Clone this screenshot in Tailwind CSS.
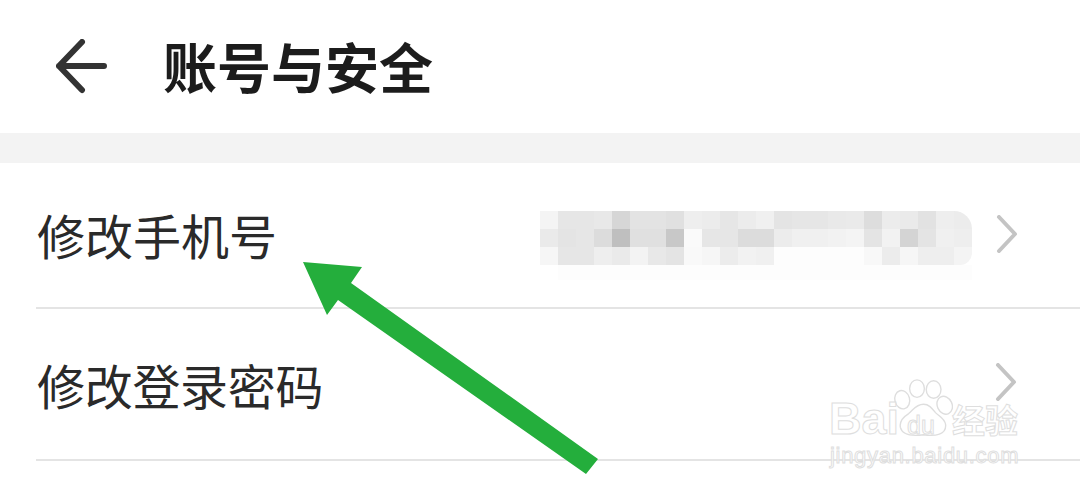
<!DOCTYPE html>
<html lang="zh-CN">
<head>
    <meta charset="UTF-8">
    <title>账号与安全</title>
    <script src="https://cdn.jsdelivr.net/npm/@tailwindcss/browser@4"></script>
</head>
<body class="relative w-[1080px] h-[493px] overflow-hidden bg-white font-['Noto_Sans_CJK_SC',sans-serif]">

    <!-- Header -->
    <div class="flex items-center h-[133px] pl-[56px]">
        <svg class="w-[52px] h-[56px]" viewBox="0 0 52 56" fill="none" stroke="#333" stroke-width="6" stroke-linecap="round" stroke-linejoin="round">
            <path d="M26 3 L3 27 L26 51 M3 27 H48"/>
        </svg>
        <h1 class="ml-[55px] mb-[2px] text-[54px] leading-none font-bold text-[#1c1c1c]">账号与安全</h1>
    </div>
    <div class="h-[30px] bg-[#f3f3f3]"></div>

    <!-- Rows -->
    <div class="ml-[36px]">
        <div class="flex items-center h-[146px] pb-[3px] border-b-2 border-[#e4e4e4]">
            <span class="ml-[1px] text-[48px] leading-none text-[#2a2a2a]">修改手机号</span>
            <div class="ml-[263px] mt-[24px] flex flex-col">
                <div class="flex h-[18px] rounded-tr-[20px] overflow-hidden">
                    <div class="w-[18px] bg-[#f4f4f4]"></div><div class="w-[18px] bg-[#e6e6e6]"></div><div class="w-[18px] bg-[#e6e6e6]"></div><div class="w-[18px] bg-[#e8e8e8]"></div><div class="w-[18px] bg-[#d6d6d6]"></div><div class="w-[18px] bg-[#e3e3e3]"></div><div class="w-[18px] bg-[#e3e3e3]"></div><div class="w-[18px] bg-[#e0e0e0]"></div><div class="w-[18px] bg-[#eeeeee]"></div><div class="w-[18px] bg-[#ececec]"></div><div class="w-[18px] bg-[#e6e6e6]"></div><div class="w-[18px] bg-[#ececec]"></div><div class="w-[18px] bg-[#f0f0f0]"></div><div class="w-[18px] bg-[#e4e4e4]"></div><div class="w-[18px] bg-[#e6e6e6]"></div><div class="w-[18px] bg-[#e6e6e6]"></div><div class="w-[18px] bg-[#e9e9e9]"></div><div class="w-[18px] bg-[#eaeaea]"></div><div class="w-[18px] bg-[#dddddd]"></div><div class="w-[18px] bg-[#ececec]"></div><div class="w-[18px] bg-[#eaeaea]"></div><div class="w-[18px] bg-[#e2e2e2]"></div><div class="w-[18px] bg-[#eeeeee]"></div><div class="w-[18px] bg-[#ececec]"></div>
                </div>
                <div class="flex h-[18px]">
                    <div class="w-[18px] bg-[#eaeaea]"></div><div class="w-[18px] bg-[#e4e4e4]"></div><div class="w-[18px] bg-[#e6e6e6]"></div><div class="w-[18px] bg-[#dcdcdc]"></div><div class="w-[18px] bg-[#bfbfbf]"></div><div class="w-[18px] bg-[#e0e0e0]"></div><div class="w-[18px] bg-[#e0e0e0]"></div><div class="w-[18px] bg-[#c8c8c8]"></div><div class="w-[18px] bg-[#fafafa]"></div><div class="w-[18px] bg-[#e6e6e6]"></div><div class="w-[18px] bg-[#e6e6e6]"></div><div class="w-[18px] bg-[#dcdcdc]"></div><div class="w-[18px] bg-[#dcdcdc]"></div><div class="w-[18px] bg-[#ececec]"></div><div class="w-[18px] bg-[#f0f0f0]"></div><div class="w-[18px] bg-[#f0f0f0]"></div><div class="w-[18px] bg-[#f2f2f2]"></div><div class="w-[18px] bg-[#f4f4f4]"></div><div class="w-[18px] bg-[#e4e4e4]"></div><div class="w-[18px] bg-[#f2f2f2]"></div><div class="w-[18px] bg-[#d4d4d4]"></div><div class="w-[18px] bg-[#e4e4e4]"></div><div class="w-[18px] bg-[#f0f0f0]"></div><div class="w-[18px] bg-[#eeeeee]"></div>
                </div>
                <div class="flex h-[18px] rounded-br-[12px] overflow-hidden">
                    <div class="w-[18px] bg-[#f6f6f6]"></div><div class="w-[18px] bg-[#e6e6e6]"></div><div class="w-[18px] bg-[#e6e6e6]"></div><div class="w-[18px] bg-[#eeeeee]"></div><div class="w-[18px] bg-[#eaeaea]"></div><div class="w-[18px] bg-[#f3f3f3]"></div><div class="w-[18px] bg-[#e8e8e8]"></div><div class="w-[18px] bg-[#e4e4e4]"></div><div class="w-[18px] bg-[#f9f9f9]"></div><div class="w-[18px] bg-[#f6f6f6]"></div><div class="w-[18px] bg-[#ececec]"></div><div class="w-[18px] bg-[#f2f2f2]"></div><div class="w-[18px] bg-[#f0f0f0]"></div><div class="w-[18px] bg-[#fdfdfd]"></div><div class="w-[18px] bg-[#fdfdfd]"></div><div class="w-[18px] bg-[#fdfdfd]"></div><div class="w-[18px] bg-[#fdfdfd]"></div><div class="w-[18px] bg-[#fdfdfd]"></div><div class="w-[18px] bg-[#f8f8f8]"></div><div class="w-[18px] bg-[#ececec]"></div><div class="w-[18px] bg-[#f6f6f6]"></div><div class="w-[18px] bg-[#eeeeee]"></div><div class="w-[18px] bg-[#eeeeee]"></div><div class="w-[18px] bg-[#f4f4f4]"></div>
                </div>
                <div class="h-[15px] w-[414px] ml-[18px] bg-[#fdfdfd]"></div>
            </div>
            <svg class="ml-[24px] w-[22px] h-[38px]" viewBox="0 0 22 38" fill="none" stroke="#c4c4c4" stroke-width="4" stroke-linecap="round" stroke-linejoin="round">
                <path d="M3 2 L19 19 L3 36"/>
            </svg>
        </div>
        <div class="flex items-center h-[152px] border-b-2 border-[#e4e4e4]">
            <span class="ml-[1px] text-[48px] leading-none tracking-[-0.3px] text-[#2a2a2a]">修改登录密码</span>
            <svg class="ml-auto mr-[63px] mt-[-4px] w-[22px] h-[38px]" viewBox="0 0 22 38" fill="none" stroke="#c4c4c4" stroke-width="4" stroke-linecap="round" stroke-linejoin="round">
                <path d="M3 2 L19 19 L3 36"/>
            </svg>
        </div>
    </div>

    <!-- Annotation arrow -->
    <svg class="absolute left-0 top-0 w-[1080px] h-[493px]" viewBox="0 0 1080 493">
        <polygon fill="#24ae3c" points="303,262 362,267 351,283 598,459 586,474 338,300 327,315"/>
    </svg>

    <!-- Watermark -->
    <div class="absolute left-[828px] top-[376px] w-[225px] h-[110px]">
        <svg class="absolute left-[65px] top-[2px] w-[60px] h-[60px]" viewBox="0 0 65 62" fill="#fff" fill-opacity="0.8" stroke="#dedede" stroke-width="1.5">
            <ellipse cx="10" cy="22" rx="8" ry="10" transform="rotate(-15 10 22)"/>
            <ellipse cx="26" cy="10" rx="8" ry="9.5"/>
            <ellipse cx="44" cy="11" rx="8" ry="9.5"/>
            <ellipse cx="56" cy="28" rx="8" ry="10" transform="rotate(-25 56 28)"/>
            <path d="M33 27 C25 27 22 33 17 37 C9 42 7 47 8 52 C10 60 18 62 33 60 C46 62 58 60 57 49 C56 42 50 40 46 36 C42 31 39 27 33 27 Z"/>
        </svg>
        <span class="absolute left-[1px] top-[20px] text-[45px] leading-none font-['Liberation_Sans',sans-serif] font-bold text-white/70 [-webkit-text-stroke:1px_#dedede]">Bai</span>
        <span class="absolute left-[79px] top-[37px] text-[25px] leading-none font-['Liberation_Sans',sans-serif] text-white/70 [-webkit-text-stroke:1px_#dedede]">du</span>
        <span class="absolute left-[124px] top-[27px] text-[33px] leading-none font-bold text-white/70 [-webkit-text-stroke:1px_#dedede]">经验</span>
        <span class="absolute left-[2px] top-[69px] text-[22px] leading-none font-['Liberation_Sans',sans-serif] tracking-[0.7px] text-white/80 [-webkit-text-stroke:1px_#dedede]">jingyan.baidu.com</span>
    </div>
</body>
</html>
